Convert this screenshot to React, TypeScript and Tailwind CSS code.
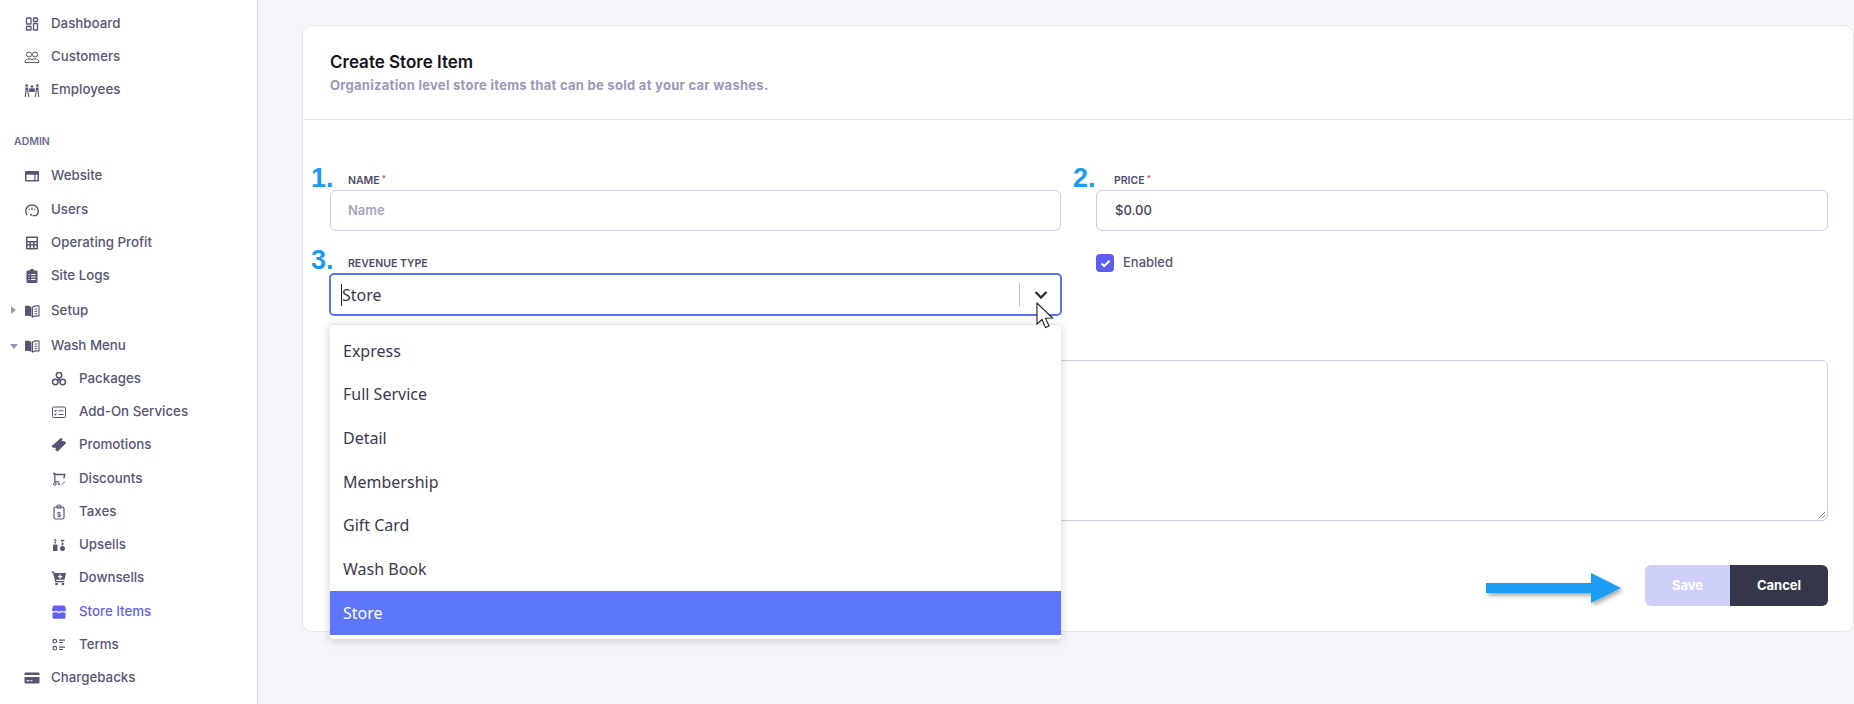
import type { ReactNode } from "react";

const Svg = ({ children, className = "" }: { children: ReactNode; className?: string }) => (
  <svg viewBox="0 0 16 16" fill="none" stroke="currentColor" strokeWidth="1" className={`w-4 h-4 ${className}`}>
    {children}
  </svg>
);

const IconDashboard = () => (
  <Svg>
    <g strokeWidth="1.300">
      <rect x="2.500" y="2" width="4.500" height="6" rx="0.600" />
      <rect x="9.500" y="2" width="4" height="3.500" rx="0.600" />
      <rect x="2.500" y="10.500" width="4.500" height="3.500" rx="0.600" />
      <rect x="9.500" y="7.500" width="4" height="6.500" rx="0.600" />
    </g>
  </Svg>
);
const IconCustomers = () => (
  <Svg>
    <circle cx="5" cy="5.500" r="2.500" />
    <circle cx="11" cy="5.500" r="2.500" />
    <path d="M1 13.500c0-2.400 1.600-3.700 4-3.700 1.400 0 2.400.4 3 1.100.6-.7 1.600-1.100 3-1.100 2.400 0 4 1.300 4 3.700z" />
  </Svg>
);
const IconEmployees = () => (
  <Svg>
    <g fill="currentColor" stroke="none">
      <circle cx="2.600" cy="3.600" r="1.300" />
      <circle cx="13.400" cy="3.600" r="1.300" />
      <circle cx="8" cy="4.500" r="1.300" />
      <path d="M1.200 5.500h2.800l.6 3.200H1.700z" />
      <path d="M12 5.500h2.800l-.5 3.200h-2.900z" />
      <rect x="5.200" y="6.300" width="5.600" height="3.700" rx="0.500" />
    </g>
    <path strokeWidth="1.100" d="M2 8.500L1.300 15M3.600 8.500l1.300 6.500M14 8.500l.7 6.500M12.400 8.500L11.100 15" />
  </Svg>
);
const IconWebsite = () => (
  <Svg>
    <path fill="currentColor" stroke="none" fillRule="evenodd" d="M2.200 3h11.600c.6 0 1.200.5 1.200 1.200v8.100c0 .6-.5 1.200-1.200 1.200H2.200c-.6 0-1.200-.5-1.200-1.200V4.200C1 3.500 1.500 3 2.200 3zm.3 3.800v5.200h7.800V6.800zm9 0v5.200h2V6.800z" />
  </Svg>
);
const IconUsers = () => (
  <Svg>
    <path strokeWidth="1.300" d="M3.300 13.200C2 12 1.500 10.400 1.800 8.700 2.300 5.300 4.900 3 8 3s5.700 2.300 6.200 5.700c.3 2-.5 3.900-2.200 5H8.500" />
    <path strokeWidth="1.200" d="M8 5.500v2.800M4.800 7.300l.8.700M11.200 7.300l-.8.700" />
    <circle cx="7" cy="12.800" r="1" fill="currentColor" stroke="none" />
  </Svg>
);
const IconCalculator = () => (
  <Svg>
    <path fill="currentColor" stroke="none" fillRule="evenodd" d="M3.200 1.500h9.600c.7 0 1.200.5 1.200 1.200v10.600c0 .7-.5 1.200-1.200 1.200H3.200c-.7 0-1.200-.5-1.200-1.200V2.700c0-.7.500-1.200 1.200-1.200zM3.500 3v3h9V3zm0 4.500V9h2V7.500zm3.500 0V9h2V7.500zm3.500 0V9h2V7.500zM3.500 10.500V13h2v-2.500zm3.500 0V13h2v-2.500zm3.500 0V13h2v-2.500z" />
  </Svg>
);
const IconClipboard = () => (
  <Svg>
    <path fill="currentColor" stroke="none" fillRule="evenodd" d="M6.500 1h3l.5 1.500h2.300c.7 0 1.200.5 1.200 1.200v10.100c0 .7-.5 1.200-1.200 1.200H3.700c-.7 0-1.200-.5-1.200-1.200V3.700c0-.7.500-1.200 1.200-1.200H6zM4.500 6v1h1V6zm2.500 0v1h4.500V6zM4.500 8.500v1h1v-1zm2.500 0v1h4.500v-1zM4.500 11v1h1v-1zm2.500 0v1h4.500v-1z" />
  </Svg>
);
const IconBook = () => (
  <Svg>
    <path fill="currentColor" stroke="none" d="M1 3c2.500-.4 4.800 0 6.500 1.200V14C5.800 13 3.500 12.600 1 13z" />
    <path strokeWidth="1.100" d="M8.500 4.200C10.200 3 12.500 2.600 15 3v10c-2.500-.4-4.800 0-6.500 1z" />
    <path d="M10.500 6.200l2.800-.3M10.500 8.500l2.800-.3M10.500 10.800l2.800-.3" />
  </Svg>
);
const IconPackages = () => (
  <Svg>
    <g strokeWidth="1.500">
      <circle cx="8" cy="4.300" r="2.700" />
      <circle cx="4.300" cy="11" r="2.700" />
      <circle cx="11.700" cy="11" r="2.700" />
    </g>
    <circle cx="8" cy="8.500" r="1.300" fill="currentColor" stroke="none" />
  </Svg>
);
const IconAddOn = () => (
  <Svg>
    <rect x="1.500" y="3" width="13" height="10.500" rx="0.800" />
    <path strokeWidth="1.100" d="M3.500 6.500l.8.8 1.200-1.500M3.500 10.200l.8.8 1.200-1.500M7.500 6.800h5M7.500 10.500h5" />
  </Svg>
);
const IconTicket = () => (
  <Svg>
    <path fill="currentColor" stroke="none" d="M10 .8l1.600 1.600-.9 1 1.200 1.200 1-.9 2.300 2.300-8.800 8.800-2.300-2.300.9-1-1.200-1.200-1 .9L.5 9.200z" />
  </Svg>
);
const IconDiscount = () => (
  <Svg>
    <path strokeWidth="1.300" d="M2 2.500h1.800v8.300h4.500M3.800 3.500h10l-1 4" />
    <circle cx="3.800" cy="13" r="1.300" />
    <circle cx="8" cy="13" r="0.800" />
    <path strokeWidth="0.900" d="M10.500 14l3.500-3.500" />
  </Svg>
);
const IconTaxes = () => (
  <Svg>
    <rect x="3" y="3" width="10" height="12" rx="1.800" strokeWidth="1.200" />
    <path strokeWidth="1.200" d="M6 3c0-1 .8-2 2-2s2 1 2 2v1H6z" />
    <text x="8" y="12.500" textAnchor="middle" fontSize="7" fill="currentColor" stroke="none" fontFamily="Liberation Sans" fontWeight="700">$</text>
  </Svg>
);
const IconUpsells = () => (
  <Svg>
    <g fill="currentColor" stroke="none">
      <rect x="2" y="7.500" width="4.500" height="6.500" rx="0.800" />
      <rect x="3.500" y="4.500" width="1.500" height="2" />
      <path d="M4.250 1.500l1.500 2.300h-3z" />
      <circle cx="11.500" cy="11.500" r="2.500" />
      <rect x="10.700" y="5.500" width="1.600" height="3" />
      <rect x="9.700" y="2.800" width="3.600" height="1.500" />
    </g>
  </Svg>
);
const IconCartPlus = () => (
  <Svg>
    <path fill="currentColor" stroke="none" fillRule="evenodd" d="M.5 1.500h2.500l.4 1.500H15l-1.500 6.800H5l.3 1.200h8v1.200H4.300L2 2.700H.5zM8.500 4.500v1.500H7v1.300h1.500v1.500h1.300V7.300h1.500V6H9.800V4.500z" />
    <circle cx="5.500" cy="14" r="1.300" fill="currentColor" stroke="none" />
    <circle cx="12" cy="14" r="1.300" fill="currentColor" stroke="none" />
  </Svg>
);
const IconStore = () => (
  <Svg>
    <path fill="currentColor" stroke="none" d="M3 1.500h10c.4 0 .7.200.9.600L15 5.500c0 1.200-.9 2-2 2-.9 0-1.600-.4-2-1-.5.600-1.200 1-2 1h-2c-.8 0-1.500-.4-2-1-.4.600-1.100 1-2 1-1.100 0-2-.8-2-2L2.100 2.100c.2-.4.500-.6.900-.6z" />
    <path fill="currentColor" stroke="none" d="M1.500 8.500c1 .3 2.300.2 3.500-.4 1 .6 2 .9 3 .9s2-.3 3-.9c1.200.6 2.500.7 3.500.4v4.800c0 .9-.7 1.500-1.500 1.500H3c-.8 0-1.500-.6-1.500-1.500z" />
  </Svg>
);
const IconTerms = () => (
  <Svg>
    <circle cx="3.800" cy="4.200" r="1.800" strokeWidth="1.200" />
    <circle cx="3.800" cy="11.200" r="1.800" strokeWidth="1.200" />
    <path strokeWidth="1.200" d="M8 3.200h6M8 5.500h4M8 10.200h6M8 12.500h4" />
  </Svg>
);
const IconCard = () => (
  <Svg>
    <path fill="currentColor" stroke="none" fillRule="evenodd" d="M1.800 2.500h12.400c.7 0 1.300.6 1.300 1.300v1.200h-15V3.800c0-.7.600-1.300 1.300-1.300zM.5 7h15v5.200c0 .7-.6 1.300-1.300 1.300H1.800c-.7 0-1.300-.6-1.300-1.300zm2 3.200v1h3v-1zm4 0v1h2v-1z" />
  </Svg>
);

type NavProps = { icon: ReactNode; label: string; sub?: boolean; active?: boolean; caret?: "right" | "down"; className?: string };

const NavItem = ({ icon, label, sub, active, caret, className = "" }: NavProps) => (
  <div
    className={`relative flex items-center h-[33.25px] text-[13.3px] font-medium ${sub ? "pl-[51px] gap-[12px]" : "pl-[24px] gap-[11px]"} ${active ? "text-[#625ff5]" : "text-[#565674]"} ${className}`}
  >
    {caret === "right" && <span className="absolute left-[11px] top-[11px] w-0 h-0 border-y-[4px] border-y-transparent border-l-[5px] border-l-[#9a9ab0]" />}
    {caret === "down" && <span className="absolute left-[10px] top-[15px] w-0 h-0 border-x-[4px] border-x-transparent border-t-[5px] border-t-[#9a9ab0]" />}
    <span className="shrink-0">{icon}</span>
    <span>{label}</span>
  </div>
);

const Marker = ({ n, className }: { n: string; className: string }) => (
  <span className={`absolute text-[27px] leading-none font-bold text-[#1a9cf3] font-['Liberation_Sans',sans-serif] ${className}`}>{n}</span>
);

const Label = ({ text, required }: { text: string; required?: boolean }) => (
  <div className="h-[16px] mb-[2px] pt-[1px] pl-[18px] flex items-center text-[10.5px] font-semibold uppercase text-[#4c4c68]">
    {text}
    {required && <span className="text-[#e5484d] text-[8px] ml-[2px] -mt-[6px]">*</span>}
  </div>
);

const OPTIONS = ["Express", "Full Service", "Detail", "Membership", "Gift Card", "Wash Book"];

export default function App() {
  return (
    <div className="h-[704px] overflow-hidden flex bg-[#f5f6fb] font-['Inter',sans-serif]">
      <aside className="w-[258px] shrink-0 bg-white border-r border-[#d5d5e4] pt-[7px]">
        <NavItem icon={<IconDashboard />} label="Dashboard" />
        <NavItem icon={<IconCustomers />} label="Customers" />
        <NavItem icon={<IconEmployees />} label="Employees" />
        <div className="mt-[27px] mb-[10px] pl-[14px] h-[16px] flex items-center text-[10.5px] font-semibold text-[#6e6e8e]">ADMIN</div>
        <NavItem icon={<IconWebsite />} label="Website" />
        <NavItem icon={<IconUsers />} label="Users" />
        <NavItem icon={<IconCalculator />} label="Operating Profit" />
        <NavItem icon={<IconClipboard />} label="Site Logs" />
        <NavItem icon={<IconBook />} label="Setup" caret="right" className="mt-[2px]" />
        <NavItem icon={<IconBook />} label="Wash Menu" caret="down" className="mt-[1px]" />
        <NavItem sub icon={<IconPackages />} label="Packages" />
        <NavItem sub icon={<IconAddOn />} label="Add-On Services" />
        <NavItem sub icon={<IconTicket />} label="Promotions" />
        <NavItem sub icon={<IconDiscount />} label="Discounts" />
        <NavItem sub icon={<IconTaxes />} label="Taxes" />
        <NavItem sub icon={<IconUpsells />} label="Upsells" />
        <NavItem sub icon={<IconCartPlus />} label="Downsells" />
        <NavItem sub active icon={<IconStore />} label="Store Items" />
        <NavItem sub icon={<IconTerms />} label="Terms" />
        <NavItem icon={<IconCard />} label="Chargebacks" />
      </aside>

      <main className="flex-1 pl-[44px] pt-[25px]">
        <div className="relative h-[607px] bg-white border border-[#e6e6ef] rounded-[10px]">
          <div className="h-[94px] border-b border-[#e6e6ef] pl-[27px] pt-[25px]">
            <h1 className="text-[17px] leading-[22px] font-semibold text-[#14141f]">Create Store Item</h1>
            <p className="text-[13px] tracking-[0.28px] leading-[18px] font-bold text-[#9a9ab8] mt-[3px]">
              Organization level store items that can be sold at your car washes.
            </p>
          </div>

          <div className="pl-[27px] pr-[25px] pt-[52px]">
            <div className="grid grid-cols-[731px_1fr] gap-x-[35px]">
              <div className="relative">
                <Marker n="1." className="-left-[19px] -top-[7px]" />
                <Label text="Name" required />
                <div className="h-[41px] border border-[#cdcde0] rounded-[6px] pl-[17px] flex items-center text-[13px] font-semibold text-[#a8a4bf]">Name</div>
              </div>
              <div className="relative">
                <Marker n="2." className="-left-[23px] -top-[7px]" />
                <Label text="Price" required />
                <div className="h-[41px] border border-[#cdcde0] rounded-[6px] pl-[18px] flex items-center text-[13px] font-medium text-[#3f3f55]">$0.00</div>
              </div>

              <div className="relative mt-[24px]">
                <Marker n="3." className="-left-[19px] -top-[8px]" />
                <Label text="Revenue Type" />
                <div className="relative h-[43px] -mx-px border-2 border-[#5b73f5] rounded-[5px] flex items-center justify-between pl-[11px] pr-[12px] bg-white">
                  <span className="relative text-[16px] text-[#3a3a4f] font-['Noto_Sans',sans-serif]">
                    <span className="absolute -left-px top-[1px] bottom-[1px] w-px bg-[#222]" />
                    Store
                  </span>
                  <div className="flex items-center gap-[14px]">
                    <span className="w-px h-[23px] bg-[#bdbdbd]" />
                    <svg viewBox="0 0 14 10" className="w-[14px] h-[10px]" fill="none" stroke="#333" strokeWidth="2.400">
                      <path d="M1.500 2l5.500 5.500L12.500 2" />
                    </svg>
                  </div>
                </div>

                <div className="absolute z-10 left-0 right-0 top-[69px] bg-white rounded-[4px] border-t border-[#e4e4e4] py-[4px] shadow-[0_2px_10px_rgba(40,40,70,0.22)]">
                  {OPTIONS.map((o) => (
                    <div key={o} className="h-[43.6px] pl-[13px] flex items-center text-[16px] text-[#3a3a4f] font-['Noto_Sans',sans-serif]">{o}</div>
                  ))}
                  <div className="h-[44px] pl-[13px] flex items-center text-[16px] text-white bg-[#5e76fb] font-['Noto_Sans',sans-serif]">Store</div>
                </div>

                <svg viewBox="0 0 18 27" className="absolute z-20 right-[7px] top-[47px] w-[18px] h-[27px]">
                  <path d="M1 1v21l5-4.500 3.500 8 3.500-1.500-3.500-7.800 7-.2z" fill="white" stroke="#222" strokeWidth="1.100" />
                </svg>
              </div>

              <div className="mt-[23px] flex items-center gap-[9px] h-[18px] text-[13px] font-medium text-[#565674]">
                <span className="w-[18px] h-[18px] rounded-[4px] bg-[#5c5ef0] flex items-center justify-center">
                  <svg viewBox="0 0 12 10" className="w-[11px] h-[9px]" fill="none" stroke="white" strokeWidth="2.200">
                    <path d="M1.500 5l3 3 6-6" />
                  </svg>
                </span>
                Enabled
              </div>
            </div>

            <div className="relative mt-[44px] h-[161px] border border-[#cdcde0] rounded-[6px]">
              <svg viewBox="0 0 10 10" className="absolute right-[1px] bottom-[1px] w-[8px] h-[8px]" stroke="#666" strokeWidth="1">
                <path d="M9 1L1 9M9 5L5 9" />
              </svg>
            </div>

            <div className="mt-[44px] flex items-center justify-end">
              <svg viewBox="0 0 140 36" className="w-[140px] h-[36px] mr-[21px] mt-[5px]">
                <defs>
                  <filter id="arrow-shadow" x="-10%" y="-30%" width="125%" height="170%">
                    <feDropShadow dx="2" dy="2.500" stdDeviation="2" floodColor="#000" floodOpacity="0.35" />
                  </filter>
                </defs>
                <path d="M2 13h105V3l30 15-30 15V23H2z" fill="#1a9cf3" filter="url(#arrow-shadow)" />
              </svg>
              <button className="w-[85px] h-[41px] bg-[#cfcffb] rounded-l-[6px] text-[13px] font-bold text-white">Save</button>
              <button className="w-[98px] h-[41px] bg-[#34364a] rounded-r-[6px] text-[13px] font-bold text-white">Cancel</button>
            </div>
          </div>
        </div>
      </main>
    </div>
  );
}
